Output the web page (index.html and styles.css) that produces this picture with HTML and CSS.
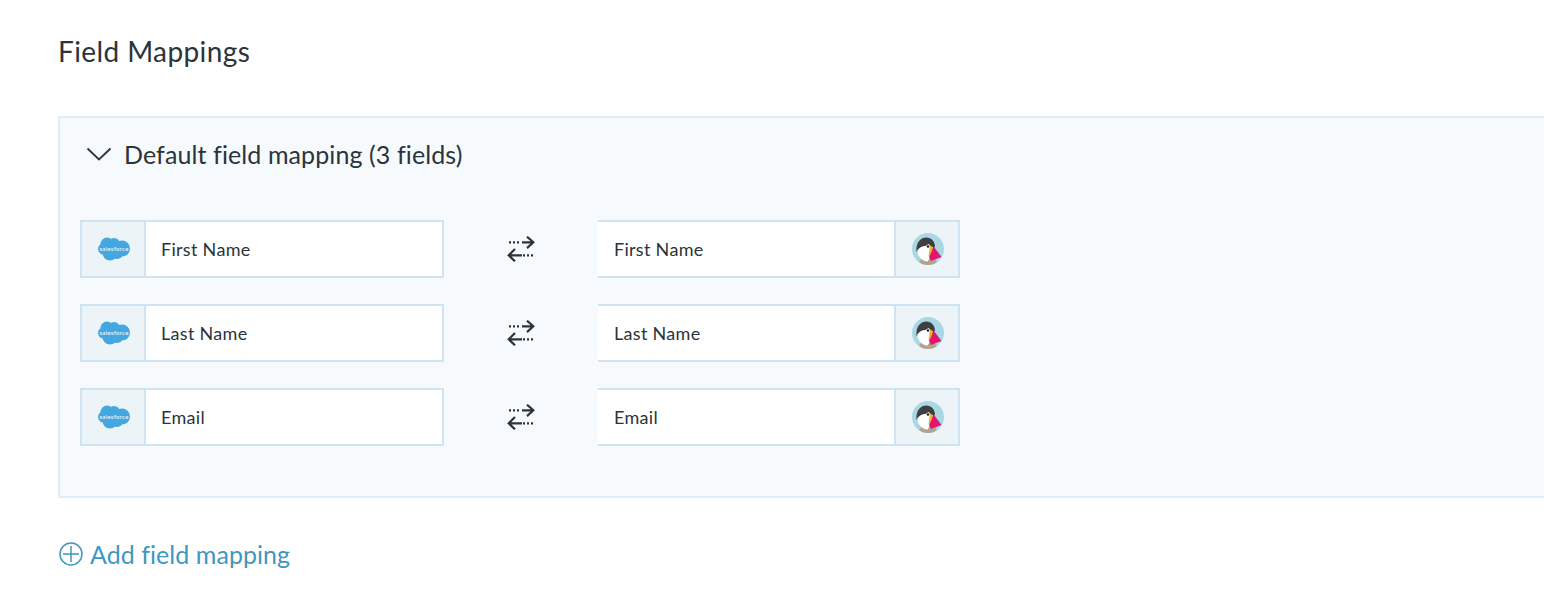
FILE: index.html
```html
<!DOCTYPE html>
<html lang="en">
<head>
  <meta charset="UTF-8" />
  <meta name="viewport" content="width=device-width, initial-scale=1.0"/>
  <title>Field Mappings</title>
  <link rel="stylesheet" href="styles.css">
</head>
<body>
  <svg class="defs" width="0" height="0">
    <symbol id="cloud" viewBox="0 0 32 24">
      <g fill="#45a7e0">
        <circle cx="9" cy="7" r="6.500"/>
        <circle cx="16" cy="7" r="6"/>
        <circle cx="24" cy="11.500" r="8"/>
        <circle cx="12" cy="16" r="7.500"/>
        <circle cx="19" cy="16" r="6"/>
        <circle cx="5.500" cy="12" r="5.500"/>
      </g>
    </symbol>
    <symbol id="puffin" viewBox="0 0 32 32">
      <circle cx="16" cy="16" r="16" fill="#a9d8e4"/>
      <path fill="#b3a48f" d="M7 29c1-3 5-4 9-4s8 1 9 4c-2 2-5 3-9 3s-7-1-9-3z"/>
      <path fill="#3d4042" d="M4.500 19C3.500 9 9 4.500 14.500 4.500 19 4.500 22.500 8 23 13l-3 6H6z"/>
      <path fill="#ffffff" d="M5 18c2-3 5-5.500 8.500-5l3-2 3 3-1 10-3 4.500C11 28.500 6 24 5 18z"/>
      <circle cx="16" cy="13.500" r="1.300" fill="#222222"/>
      <path fill="#f2b035" d="M18 12.500l3 1.500-2 10-2.500-1z"/>
      <path fill="#e5146f" d="M22 14l7.500 10-10.500 4-2-4z"/>
    </symbol>
    <symbol id="swap" viewBox="0 0 28 26">
      <path fill="none" stroke="#2b343b" stroke-width="2.200" d="M15 6.300h11M20 .7l6.300 5.600-6.300 5.800M15 19.300H2M8 13l-6.300 6.300 6.300 6"/>
      <path fill="none" stroke="#2b343b" stroke-width="2.200" stroke-dasharray="2 2" d="M2 6.300h11M26 19.300H16"/>
    </symbol>
  </svg>

  <div class="page">
    <h1>Field Mappings</h1>

    <div class="panel">
      <div class="panel-head">
        <svg class="chevron" width="26" height="14" viewBox="0 0 26 14"><path d="M1.500 1.500L13 12.500 24.500 1.500" fill="none" stroke="#2b343b" stroke-width="1.800"/></svg>
        <span>Default field mapping (3 fields)</span>
      </div>

      <div class="rows">
        <div class="row">
          <div class="field">
            <div class="field-icon field-icon-left"><svg width="32" height="24" viewBox="0 0 32 24"><use href="#cloud"/><text x="16" y="13.500" class="sf-text">salesforce</text></svg></div>
            <div class="field-name">First Name</div>
          </div>
          <div class="swap"><svg width="28" height="26"><use href="#swap"/></svg></div>
          <div class="field field-right">
            <div class="field-name">First Name</div>
            <div class="field-icon field-icon-right"><svg width="32" height="32"><use href="#puffin"/></svg></div>
          </div>
        </div>

        <div class="row">
          <div class="field">
            <div class="field-icon field-icon-left"><svg width="32" height="24" viewBox="0 0 32 24"><use href="#cloud"/><text x="16" y="13.500" class="sf-text">salesforce</text></svg></div>
            <div class="field-name">Last Name</div>
          </div>
          <div class="swap"><svg width="28" height="26"><use href="#swap"/></svg></div>
          <div class="field field-right">
            <div class="field-name">Last Name</div>
            <div class="field-icon field-icon-right"><svg width="32" height="32"><use href="#puffin"/></svg></div>
          </div>
        </div>

        <div class="row">
          <div class="field">
            <div class="field-icon field-icon-left"><svg width="32" height="24" viewBox="0 0 32 24"><use href="#cloud"/><text x="16" y="13.500" class="sf-text">salesforce</text></svg></div>
            <div class="field-name">Email</div>
          </div>
          <div class="swap"><svg width="28" height="26"><use href="#swap"/></svg></div>
          <div class="field field-right">
            <div class="field-name">Email</div>
            <div class="field-icon field-icon-right"><svg width="32" height="32"><use href="#puffin"/></svg></div>
          </div>
        </div>
      </div>
    </div>

    <a class="add-link" href="#">
      <svg width="24" height="24" viewBox="0 0 24 24"><circle cx="12" cy="12" r="11" fill="none" stroke="#3f97bf" stroke-width="1.500"/><path d="M12 4v16M4 12h16" fill="none" stroke="#3f97bf" stroke-width="1.500"/></svg>
      <span>Add field mapping</span>
    </a>
  </div>
</body>
</html>
```

FILE: styles.css
```css
* {
  box-sizing: border-box;
}

html, body {
  height: 100%;
}

body {
  margin: 0;
  background: #fff;
  color: #2b343b;
  font-family: Lato, "Open Sans", sans-serif;
  overflow: hidden;
}

.defs {
  display: block;
}

.sf-text {
  fill: #fff;
  font-family: Lato, sans-serif;
  font-size: 6px;
  text-anchor: middle;
}

.page {
  padding: 34px 0 0 58px;
}

h1 {
  margin: 0 0 47px;
  font-size: 28px;
  font-weight: 400;
  line-height: 35px;
  letter-spacing: .4px;
}

.panel {
  width: 1520px;
  height: 382px;
  padding: 0 20px;
  background: #f6fafd;
  border: 2px solid #dfeef6;
}

.panel-head {
  display: flex;
  align-items: center;
  gap: 12px;
  height: 72px;
  padding-left: 6px;
  font-size: 25px;
  letter-spacing: .1px;
}

.rows {
  display: flex;
  flex-direction: column;
  gap: 26px;
  padding-top: 30px;
}

.row {
  display: flex;
  align-items: center;
}

.field {
  display: flex;
  width: 364px;
  height: 58px;
  background: #fff;
  border: 2px solid #cfe3f0;
  font-size: 18px;
  letter-spacing: .3px;
}

.field-right {
  width: 362px;
  border-left: 0;
}

.field-icon {
  display: flex;
  align-items: center;
  justify-content: center;
  flex: none;
  width: 64px;
  padding-left: 2px;
  background: #edf4f8;
}

.field-icon-left {
  border-right: 2px solid #cfe3f0;
}

.field-icon-right {
  border-left: 2px solid #cfe3f0;
}

.field-name {
  flex: 1;
  padding-left: 15px;
  line-height: 54px;
}

.field-right .field-name {
  padding-left: 16px;
}

.swap {
  display: flex;
  justify-content: center;
  width: 154px;
}

.add-link {
  display: flex;
  align-items: center;
  gap: 7px;
  margin: 41px 0 0 1px;
  color: #3f97bf;
  font-size: 25px;
  line-height: 30px;
  letter-spacing: .05px;
  text-decoration: none;
}
```
